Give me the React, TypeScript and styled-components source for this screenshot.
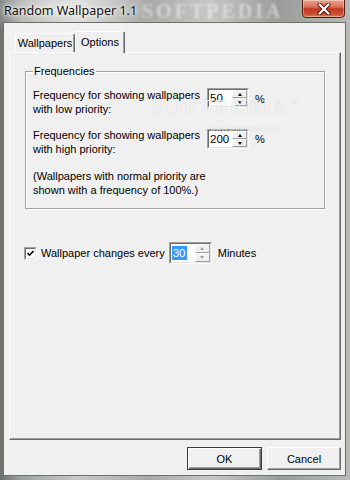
import React from 'react';
import styled, { createGlobalStyle } from 'styled-components';

const GlobalStyle = createGlobalStyle`
  html, body {
    margin: 0;
    padding: 0;
    width: 350px;
    height: 480px;
    overflow: hidden;
  }
  body {
    font-family: "Liberation Sans", Arial, sans-serif;
    font-size: 11px;
    color: #000;
  }
  * { box-sizing: border-box; }
`

const Window = styled.div`
  width: 350px;
  height: 480px;
  display: flex;
  flex-direction: column;
  background:
    radial-gradient(ellipse 90px 30px at 60px 8px, rgba(255,255,255,0.6), transparent),
    linear-gradient(90deg, #6c706c 0%, #9fa19e 6%, #c9c9c8 22%, #a9aaa8 42%, #c7c7c6 60%, #9a9c99 80%, #b9bab8 100%);
`

const TitleBar = styled.div`
  height: 22px;
  flex: none;
  display: flex;
  justify-content: space-between;
  align-items: flex-start;
  padding: 0 5px 0 4px;
  position: relative;
`

const Title = styled.span`
  font-family: "Noto Sans", "Open Sans", sans-serif;
  font-size: 12.5px;
  line-height: 21px;
  color: #101010;
  text-shadow: 0 0 6px #fff, 0 0 3px #fff;
  position: relative;
  z-index: 1;
`

const TitleMark = styled.span`
  position: absolute;
  left: 142px;
  top: 0;
  line-height: 22px;
  font-family: "Liberation Serif", serif;
  font-weight: bold;
  font-size: 20px;
  letter-spacing: 3px;
  color: rgba(255, 255, 255, 0.45);
  filter: blur(1.2px);
`

const CloseButton = styled.div`
  width: 43px;
  height: 19px;
  margin-top: -1px;
  border: 1px solid #5b1a0e;
  border-radius: 0 0 4px 4px;
  background: linear-gradient(#e8a391 0%, #d9725a 40%, #c0391f 52%, #c94b30 80%, #dc7a58 100%);
  box-shadow: inset 0 0 0 1px rgba(255, 255, 255, 0.35);
  display: flex;
  align-items: center;
  justify-content: center;
  position: relative;
  z-index: 1;
`

const Client = styled.div`
  flex: 1;
  margin: 0 4px 4px 3px;
  background: #f0f0f0;
  border: 1px solid #68716b;
  display: flex;
  flex-direction: column;
  padding: 8px 4px 5px 5px;
`

const TabStrip = styled.div`
  height: 21px;
  flex: none;
  display: flex;
  align-items: flex-end;
  padding-left: 6px;
`

const Tab = styled.div<{ $active?: boolean; $w: number }>`
  width: ${p => p.$w}px;
  height: ${p => (p.$active ? 22 : 19)}px;
  padding-top: ${p => (p.$active ? 3 : 2)}px;
  margin-bottom: ${p => (p.$active ? -1 : 0)}px;
  text-align: center;
  background: #f0f0f0;
  border-top: 1px solid #fff;
  border-left: 1px solid #fff;
  border-right: 1px solid #696969;
  box-shadow: inset -1px 0 0 #a0a0a0;
  border-radius: 2px 2px 0 0;
  position: relative;
  z-index: ${p => (p.$active ? 1 : 0)};
  line-height: 14px;
`

const Panel = styled.div`
  flex: 1;
  position: relative;
  border-top: 1px solid #fff;
  border-left: 1px solid #fff;
  border-right: 1px solid #696969;
  border-bottom: 1px solid #696969;
  box-shadow: inset -1px -1px 0 #a0a0a0;
  padding: 12px 15px 0 15px;
`

const Group = styled.fieldset`
  margin: 0;
  height: 144px;
  padding: 10px 0 0 7px;
  border: 1px solid #a0a0a0;
  box-shadow: inset 1px 1px 0 #fff, 1px 1px 0 #fff;
`

const Legend = styled.legend`
  padding: 0 1px;
  margin-left: 0;
  line-height: 13px;
`

const Row = styled.div<{ $gap?: number }>`
  display: flex;
  align-items: flex-start;
  margin-top: ${p => p.$gap ?? 0}px;
`

const Label = styled.div`
  width: 174px;
  line-height: 14px;
`

const Note = styled.div`
  line-height: 14px;
  margin-top: 13px;
`

const Unit = styled.span`
  margin-left: 6px;
  line-height: 20px;
  margin-top: 1px;
`

const SpinOuter = styled.div<{ $w: number; $h: number; $top?: number }>`
  width: ${p => p.$w}px;
  height: ${p => p.$h}px;
  margin-top: ${p => p.$top ?? 0}px;
  border: 1px solid;
  border-color: #a0a0a0 #fff #fff #a0a0a0;
  flex: none;
`

const SpinInner = styled.div`
  height: 100%;
  border: 1px solid;
  border-color: #696969 #e3e3e3 #e3e3e3 #696969;
  background: #fff;
  display: flex;
`

const SpinValue = styled.div`
  flex: 1;
  padding-left: 1px;
  display: flex;
  align-items: center;
  font-size: 11.5px;
`

const Selected = styled.span`
  background: #3399ff;
  color: #fff;
  padding: 0 1px;
  line-height: 14px;
`

const SpinButtons = styled.div`
  width: 15px;
  display: flex;
  flex-direction: column;
`

const SpinArrow = styled.div<{ $down?: boolean; $disabled?: boolean }>`
  flex: 1;
  background: #f0f0f0;
  border: 1px solid;
  border-color: #fff #a0a0a0 #a0a0a0 #fff;
  display: flex;
  align-items: center;
  justify-content: center;

  &::after {
    content: '';
    width: 0;
    height: 0;
    border-left: 2.5px solid transparent;
    border-right: 2.5px solid transparent;
    ${p => (p.$down ? 'border-top' : 'border-bottom')}: 3px solid ${p => (p.$disabled ? '#a0a0a0' : '#000')};
  }
`

const ChangeRow = styled.div`
  display: flex;
  align-items: center;
  margin: 33px 0 0 -1px;
`

const CheckBox = styled.div`
  width: 13px;
  height: 13px;
  border: 1px solid;
  border-color: #a0a0a0 #fff #fff #a0a0a0;
  flex: none;
`

const CheckInner = styled.div`
  width: 100%;
  height: 100%;
  background: #fff;
  border: 1px solid;
  border-color: #696969 #e3e3e3 #e3e3e3 #696969;
  display: flex;
  align-items: center;
  justify-content: center;
`

const CheckText = styled.span`
  margin: 0 4px 0 4px;
`

const Minutes = styled.span`
  margin-left: 6px;
`

const Watermark = styled.div`
  position: absolute;
  left: 142px;
  top: 42px;
  font-family: "Liberation Serif", serif;
  font-weight: bold;
  font-size: 21px;
  letter-spacing: 2px;
  color: rgba(255, 255, 255, 0.75);
  text-shadow: 0 0 1px rgba(0, 0, 0, 0.18);
  pointer-events: none;

  small {
    display: block;
    font-family: "Liberation Sans", sans-serif;
    font-weight: normal;
    font-size: 8px;
    letter-spacing: 0;
    margin: 4px 0 0 58px;
  }

  sup {
    font-size: 8px;
    font-weight: normal;
  }
`

const ButtonRow = styled.div`
  flex: none;
  display: flex;
  justify-content: flex-end;
  gap: 5px;
  margin-top: 7px;
`

const Button = styled.div<{ $default?: boolean }>`
  width: ${p => (p.$default ? 75 : 74)}px;
  height: 23px;
  display: flex;
  align-items: center;
  justify-content: center;
  background: #f0f0f0;
  border: 1px solid;
  border-color: ${p => (p.$default ? '#3c3c3c' : '#fff #696969 #696969 #fff')};
  box-shadow: ${p => (p.$default
    ? 'inset 1px 1px 0 #fff, inset -1px -1px 0 #696969, inset -2px -2px 0 #a0a0a0'
    : 'inset -1px -1px 0 #a0a0a0')};
`

const Spin: React.FC<{ w: number; h: number; top?: number; disabled?: boolean; children: React.ReactNode }> = ({ w, h, top, disabled, children }) => (
  <SpinOuter $w={w} $h={h} $top={top}>
    <SpinInner>
      <SpinValue>{children}</SpinValue>
      <SpinButtons>
        <SpinArrow $disabled={disabled} />
        <SpinArrow $down $disabled={disabled} />
      </SpinButtons>
    </SpinInner>
  </SpinOuter>
)

export default function App() {
  return (
    <>
      <GlobalStyle />
      <Window>
        <TitleBar>
          <Title>Random Wallpaper 1.1</Title>
          <TitleMark>SOFTPEDIA</TitleMark>
          <CloseButton>
            <svg width="14" height="12" viewBox="0 0 14 12">
              <path d="M2.5 1.5 L11.5 10.5 M11.5 1.5 L2.5 10.5" stroke="#4a1208" strokeWidth="4" strokeLinecap="round" />
              <path d="M2.5 1.5 L11.5 10.5 M11.5 1.5 L2.5 10.5" stroke="#fff" strokeWidth="2.2" strokeLinecap="round" />
            </svg>
          </CloseButton>
        </TitleBar>

        <Client>
          <TabStrip>
            <Tab $w={60}>Wallpapers</Tab>
            <Tab $w={50} $active>Options</Tab>
          </TabStrip>

          <Panel>
            <Watermark>
              SOFTPEDIA<sup>™</sup>
              <small>www.softpedia.com</small>
            </Watermark>

            <Group>
              <Legend>Frequencies</Legend>
              <Row>
                <Label>Frequency for showing wallpapers<br />with low priority:</Label>
                <Spin w={42} h={20}>50</Spin>
                <Unit>%</Unit>
              </Row>
              <Row $gap={12}>
                <Label>Frequency for showing wallpapers<br />with high priority:</Label>
                <Spin w={42} h={20} top={1}>200</Spin>
                <Unit>%</Unit>
              </Row>
              <Note>(Wallpapers with normal priority are<br />shown with a frequency of 100%.)</Note>
            </Group>

            <ChangeRow>
              <CheckBox>
                <CheckInner>
                  <svg width="7" height="7" viewBox="0 0 7 7">
                    <path d="M0.5 3 L2.5 5.2 L6.5 1" stroke="#000" strokeWidth="1.6" fill="none" />
                  </svg>
                </CheckInner>
              </CheckBox>
              <CheckText>Wallpaper changes every</CheckText>
              <Spin w={43} h={22} disabled>
                <Selected>30</Selected>
              </Spin>
              <Minutes>Minutes</Minutes>
            </ChangeRow>
          </Panel>

          <ButtonRow>
            <Button $default>OK</Button>
            <Button>Cancel</Button>
          </ButtonRow>
        </Client>
      </Window>
    </>
  )
}
